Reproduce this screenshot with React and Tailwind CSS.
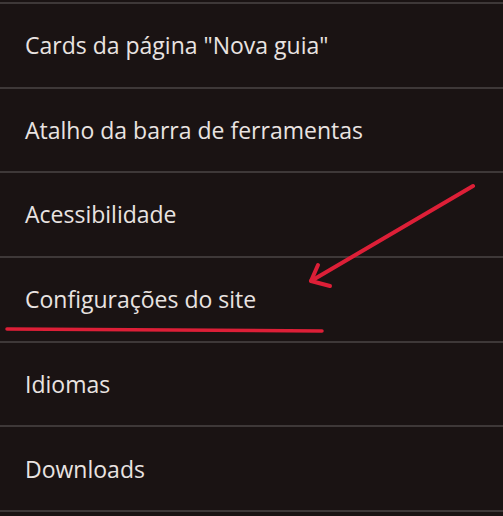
const items = [
  'Cards da página "Nova guia"',
  'Atalho da barra de ferramentas',
  'Acessibilidade',
  'Configurações do site',
  'Idiomas',
  'Downloads',
]

export default function App() {
  return (
    <div className="relative w-[503px] h-[516px] overflow-hidden bg-[#1a1313]" style={{ fontFamily: '"Open Sans", Roboto, sans-serif' }}>
      <div className="h-[2px]" />
      <div className="h-[2px] bg-[#3e3838]" />
      {items.map((label) => (
        <div key={label}>
          <div className="h-[82.7px] flex items-center pl-[25px] text-[23px] text-[#e9e3e1]">
            {label}
          </div>
          <div className="h-[2px] bg-[#3e3838]" />
        </div>
      ))}

      {/* red annotation */}
      <svg className="absolute inset-0 pointer-events-none" width="503" height="516" viewBox="0 0 503 516">
        <g stroke="#dd1f37" strokeWidth="4" strokeLinecap="round" strokeLinejoin="round" fill="none">
          <path d="M473 186 L311 281" />
          <path d="M318 265 L311 281 L330 286" />
          <path d="M7 329 L322 331" strokeWidth="3.5" />
        </g>
      </svg>
    </div>
  )
}
